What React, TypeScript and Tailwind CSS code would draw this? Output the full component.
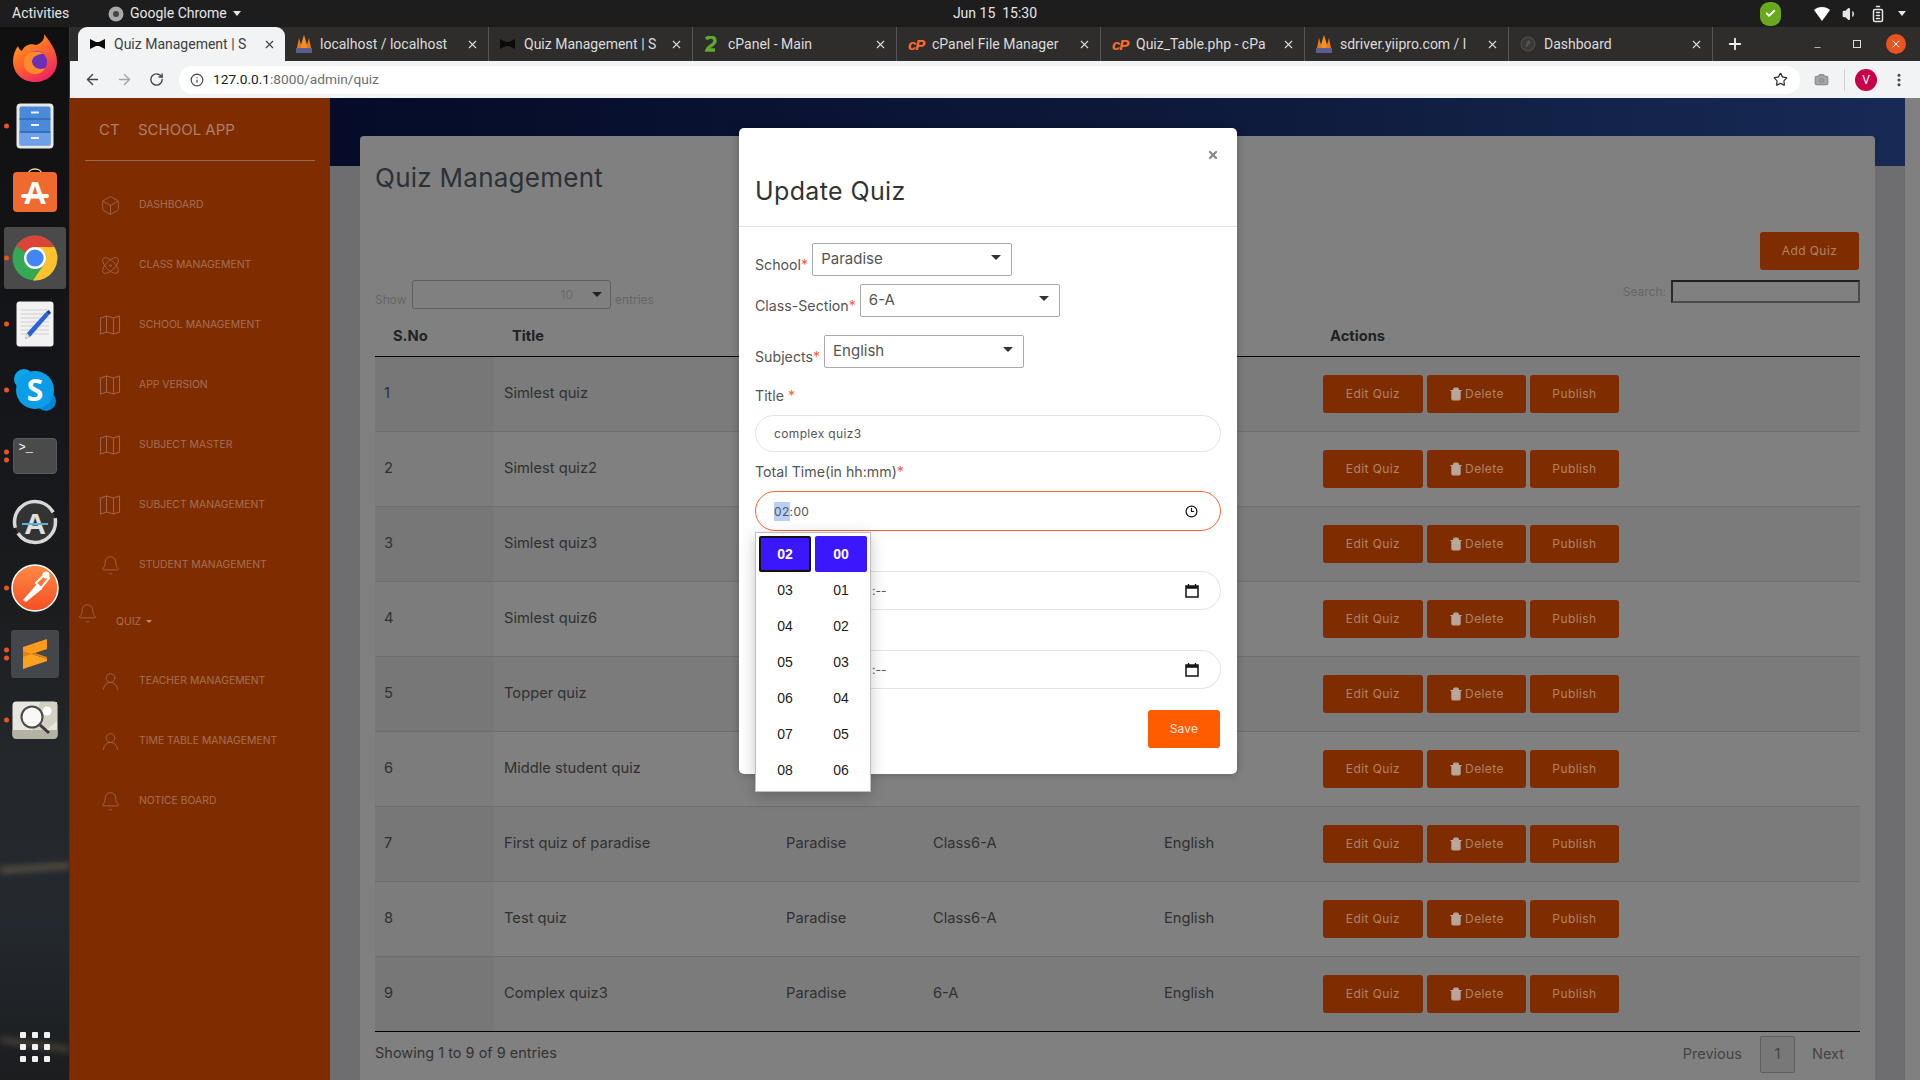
import React from "react";
import { Atom, Bell, Box, UserRound, ArrowLeft, ArrowRight, RotateCw, Info, Star, Camera, Plus, X, Minus, Clock3, Trash2, EllipsisVertical, Volume1, BatteryFull, Check } from "lucide-react";

const ui = "font-['Roboto',sans-serif]";

function MapIcon() {
  return (
    <svg width="22" height="22" viewBox="0 0 22 22" fill="none" stroke="#9c6248" strokeWidth="1.1" strokeLinejoin="round">
      <path d="M1.5 4 L7.5 2 L14.5 4 L20.5 2 V18 L14.5 20 L7.5 18 L1.5 20 Z" />
      <path d="M7.5 2 V18 M14.5 4 V20" />
    </svg>
  );
}

function Dot({ n = 1 }: { n?: number }) {
  return (
    <div className="absolute left-[4px] top-1/2 flex -translate-y-1/2 flex-col gap-[3px]">
      {Array.from({ length: n }).map((_, i) => (
        <span key={i} className="block h-[5px] w-[5px] rounded-full bg-[#e95420]" />
      ))}
    </div>
  );
}

function Firefox() {
  return (
    <svg width="46" height="50" viewBox="0 0 46 50">
      <defs>
        <linearGradient id="ff" x1="0" y1="0" x2="0.6" y2="1">
          <stop offset="0" stopColor="#ffb21a" />
          <stop offset="0.5" stopColor="#ff6a2a" />
          <stop offset="1" stopColor="#f0285f" />
        </linearGradient>
      </defs>
      <path d="M32 1 C38 9 45 17 45 29 C45 41 35 49 23 49 C10 49 1 40 1 28 C1 22 3 17 6 13 C7 16 8 17 10 18 C12 13 18 10 24 12 C30 10 33 6 32 1 Z" fill="url(#ff)" />
      <circle cx="24" cy="29" r="11" fill="#6b2fb8" />
      <path d="M13 24 C17 18 26 17 31 21 C26 21 21 23 20 28 C20 34 27 38 33 35 C29 44 15 43 12 33 C11 30 12 27 13 24 Z" fill="#ff8a2a" />
    </svg>
  );
}

function Files() {
  return (
    <svg width="38" height="46" viewBox="0 0 38 46">
      <rect x="0.5" y="0.5" width="37" height="45" rx="4" fill="#e8e8e4" />
      <rect x="3.5" y="3.5" width="31" height="39" rx="2" fill="#4a8ad8" />
      <rect x="3.5" y="30" width="31" height="12.5" fill="#6f9fe8" />
      <path d="M3.5 16 H34.5 M3.5 29 H34.5" stroke="#1f5aa8" strokeWidth="1.2" />
      <path d="M15 9.5 H23 M15 22 H23 M15 35 H23" stroke="#eef4fb" strokeWidth="2" />
    </svg>
  );
}

function Software() {
  return (
    <svg width="46" height="46" viewBox="0 0 46 46">
      <path d="M16 9 C16 1 30 1 30 9" fill="none" stroke="#f2d9a8" strokeWidth="1.5" />
      <rect x="1" y="6" width="44" height="40" rx="4" fill="#f0692f" />
      <text x="23" y="38" textAnchor="middle" fontFamily="Liberation Sans" fontWeight="700" fontSize="32" fill="#fff">A</text>
      <rect x="9" y="28" width="28" height="4" rx="2" fill="#fff" />
    </svg>
  );
}

function Chrome() {
  return (
    <svg width="46" height="46" viewBox="0 0 46 46">
      <circle cx="23" cy="23" r="22.5" fill="#34a853" />
      <path d="M23 .5 A22.5 22.5 0 0 1 42.5 12 L23 12 A11 11 0 0 0 13.5 17.5 L4 11 A22.5 22.5 0 0 1 23 .5 Z" fill="#db4437" />
      <path d="M42.5 12 A22.5 22.5 0 0 1 21 45.4 L32.6 28.5 A11 11 0 0 0 32.5 17.5 L23 12 Z" fill="#fdc22d" />
      <circle cx="23" cy="23" r="11" fill="#fff" />
      <circle cx="23" cy="23" r="8.6" fill="#4285f4" />
    </svg>
  );
}

function Editor() {
  return (
    <svg width="38" height="46" viewBox="0 0 38 46">
      <rect x="0.5" y="0.5" width="37" height="45" rx="3" fill="#f2f2f2" />
      <path d="M5 9 H33 M5 13 H33 M5 17 H33 M5 21 H33 M5 25 H33 M5 29 H33 M5 33 H33" stroke="#cfcfcf" strokeWidth="1" />
      <path d="M11 32 L30 11 L33 14 L14 36 L9 38 Z" fill="#2a62d8" />
      <path d="M30 11 L33 9 L35 12 L33 14 Z" fill="#1c3f95" />
      <path d="M9 38 L11 32 L14 36 Z" fill="#f4d9b0" />
    </svg>
  );
}

function Skype() {
  return (
    <svg width="44" height="44" viewBox="0 0 44 44">
      <circle cx="11" cy="11" r="10" fill="#0aa6ee" />
      <circle cx="33" cy="33" r="10" fill="#0086d6" />
      <circle cx="22" cy="22" r="19" fill="#0b9de8" />
      <text x="22" y="33" textAnchor="middle" fontFamily="Open Sans" fontWeight="700" fontSize="30" fill="#fff">S</text>
    </svg>
  );
}

function Terminal() {
  return (
    <div className="flex h-[36px] w-[44px] items-start rounded-[4px] border border-[#5a5a5a] bg-[#4a4a4a] pl-[5px] text-[12px] leading-[18px] text-white font-['Liberation_Mono',monospace]">
      &gt;_
    </div>
  );
}

function Updater() {
  return (
    <svg width="46" height="46" viewBox="0 0 46 46">
      <circle cx="23" cy="23" r="20.5" fill="#333" stroke="#d8d8d8" strokeWidth="3.5" strokeDasharray="52 6 60 6" />
      <text x="23" y="35" textAnchor="middle" fontFamily="Liberation Sans" fontWeight="700" fontSize="30" fill="#e0e0e0">A</text>
      <rect x="10" y="24" width="26" height="2" fill="#4fb7d8" />
    </svg>
  );
}

function Postman() {
  return (
    <svg width="48" height="48" viewBox="0 0 48 48">
      <defs>
        <linearGradient id="pm" x1="0.5" y1="0" x2="0.5" y2="1">
          <stop offset="0" stopColor="#ff8b47" />
          <stop offset="1" stopColor="#f54e22" />
        </linearGradient>
      </defs>
      <circle cx="24" cy="24" r="23" fill="url(#pm)" stroke="#fff" strokeWidth="1.5" />
      <path d="M12 36 L26 20 L31 25 L15 38 Z" fill="#fff" />
      <path d="M25 19 L34 10 L38 14 L30 24 Z" fill="none" stroke="#fff" strokeWidth="2" />
      <circle cx="35" cy="11" r="3.5" fill="#fff" />
    </svg>
  );
}

function Sublime() {
  return (
    <svg width="48" height="48" viewBox="0 0 48 48">
      <rect width="48" height="48" rx="3" fill="#43464a" />
      <path d="M12 17 L36 9 V19 L12 27 Z" fill="#ff9a1a" />
      <path d="M12 21 L36 29 V31 L12 39 V29 Z" fill="#ffa11f" />
      <path d="M12 27 L24 23 L36 27 V29 L12 21 Z" fill="#e08314" />
    </svg>
  );
}

function Magnifier() {
  return (
    <svg width="46" height="38" viewBox="0 0 46 38">
      <rect x="0.5" y="0.5" width="45" height="37" rx="4" fill="#e8e7df" />
      <path d="M.5 29 H45.5 V34 a4 4 0 0 1 -4 4 H4.5 a4 4 0 0 1 -4 -4 Z" fill="#b3b2a3" />
      <path d="M28 1 L45 1 V20 L34 29 H20 Z" fill="#d2d1c4" />
      <circle cx="35" cy="10" r="4.5" fill="#fff" />
      <circle cx="20" cy="16" r="10.5" fill="#f8f8f6" stroke="#4a4a4a" strokeWidth="2" />
      <path d="M28 24 L37 32" stroke="#3a3a3a" strokeWidth="3" />
    </svg>
  );
}

function Dock() {
  const items: [React.ReactNode, number, boolean, string][] = [
    [<Firefox />, 0, false, "-mt-[4px]"],
    [<Files />, 1, false, ""],
    [<Software />, 0, false, "-mt-[6px]"],
    [<Chrome />, 1, true, ""],
    [<Editor />, 1, false, ""],
    [<Skype />, 1, false, ""],
    [<Terminal />, 2, false, ""],
    [<Updater />, 0, false, ""],
    [<Postman />, 1, false, ""],
    [<Sublime />, 2, false, ""],
    [<Magnifier />, 1, false, ""],
  ];
  return (
    <div className="relative flex h-full w-[70px] shrink-0 flex-col justify-between overflow-hidden border-r border-[#33383c] bg-[linear-gradient(180deg,#101010_0%,#15161a_35%,#1b1c1e_55%,#24282c_70%,#24292f_85%,#1b1d1f_100%)]">
      <div className="absolute left-0 top-[838px] h-[6px] w-[70px] -rotate-[4deg] bg-[#57503f] blur-[3px]" />
      <div className="absolute left-0 top-[1015px] h-[5px] w-[70px] rotate-[8deg] bg-[#4d4638] blur-[3px]" />
      <div className="relative flex flex-col">
        {items.map(([icon, dots, active, shift], i) => (
          <div key={i} className="relative flex h-[66px] items-center justify-center">
            {active ? <div className="absolute left-[4px] top-[2px] h-[62px] w-[62px] rounded-[3px] bg-[#4a4a4a]" /> : null}
            <div className={`relative flex ${shift}`}>{icon}</div>
            {dots ? <Dot n={dots} /> : null}
          </div>
        ))}
      </div>
      <div className="relative mb-[18px] grid grid-cols-3 gap-x-[6px] gap-y-[6px] self-center">
        {Array.from({ length: 9 }).map((_, i) => (
          <span key={i} className="h-[6px] w-[6px] rounded-[1px] bg-[#f2f2f2]" />
        ))}
      </div>
    </div>
  );
}

function TopBar() {
  return (
    <div className={`flex h-[27px] shrink-0 items-center justify-between bg-[#1d1d1d] pl-[12px] pr-[14px] text-[14px] text-[#e6e6e6] ${ui}`}>
      <div className="flex w-[500px] items-center">
        <span className="w-[95px]">Activities</span>
        <svg width="16" height="16" viewBox="0 0 16 16" className="mr-[6px] ml-[1px]">
          <circle cx="8" cy="8" r="7.5" fill="#a8a8a8" />
          <circle cx="8" cy="8" r="3" fill="#444" />
        </svg>
        <span>Google Chrome</span>
        <span className="ml-[6px] h-0 w-0 border-x-[4px] border-t-[5px] border-x-transparent border-t-[#e6e6e6]" />
      </div>
      <div className="mr-[268px]">Jun 15&nbsp;&nbsp;15:30</div>
      <div className="flex w-[160px] items-center justify-end gap-[11px]">
        <div className="mr-[22px] flex h-[24px] w-[21px] items-center justify-center rounded-[9px] bg-[#6aa81e]">
          <Check size={11} strokeWidth={4} color="#fff" />
        </div>
        <svg width="16" height="14" viewBox="0 0 16 14" className="mr-[1px]">
          <path d="M0 3 C4 -1 12 -1 16 3 L8 14 Z" fill="#fff" />
        </svg>
        <Volume1 size={16} color="#e6e6e6" fill="#e6e6e6" />
        <BatteryFull size={18} color="#e6e6e6" className="-rotate-90" />
        <span className="h-0 w-0 border-x-[4px] border-t-[5px] border-x-transparent border-t-[#e6e6e6]" />
      </div>
    </div>
  );
}

function Favicon({ kind }: { kind: string }) {
  if (kind === "bow")
    return (
      <svg width="15" height="10" viewBox="0 0 15 10">
        <path d="M0 0 L6 3 V7 L0 10 Z M15 0 L9 3 V7 L15 10 Z M6 3 H9 V7 H6 Z" fill="#0b0b0b" />
      </svg>
    );
  if (kind === "pma")
    return (
      <svg width="16" height="18" viewBox="0 0 16 18">
        <path d="M8 0 L12 13 H4 Z" fill="#f0902a" />
        <path d="M3 3 L6 13 H1 Z M13 3 L15 13 H10 Z" fill="#e87a1c" />
        <rect x="0" y="13" width="16" height="5" fill="#5a5f8f" />
      </svg>
    );
  if (kind === "cpanel")
    return (
      <svg width="13" height="17" viewBox="0 0 13 17">
        <path d="M2 3 C5 0 11 0 11 5 C11 9 4 10 3 14 H11" fill="none" stroke="#5fa82a" strokeWidth="3.4" />
      </svg>
    );
  if (kind === "cp")
    return (
      <span className="text-[15px] font-bold italic leading-none tracking-[-1px] text-[#ff6c2c] font-['Liberation_Sans',sans-serif]">cP</span>
    );
  return (
    <svg width="16" height="16" viewBox="0 0 16 16">
      <circle cx="8" cy="8" r="7" fill="#3a3a3a" stroke="#555" />
      <path d="M5 11 L8 4 L11 6 L7 11 Z" fill="#555" />
    </svg>
  );
}

const tabs = [
  ["bow", "Quiz Management | S"],
  ["pma", "localhost / localhost"],
  ["bow", "Quiz Management | S"],
  ["cpanel", "cPanel - Main"],
  ["cp", "cPanel File Manager"],
  ["cp", "Quiz_Table.php - cPa"],
  ["pma", "sdriver.yiipro.com / l"],
  ["dash", "Dashboard"],
];

function TabStrip() {
  return (
    <div className={`flex h-[34px] shrink-0 items-center bg-[#2f2d2c] pl-[8px] text-[14px] ${ui}`}>
      {tabs.map(([k, t], i) => (
        <div
          key={i}
          className={
            i === 0
              ? "flex h-[34px] w-[207px] items-center rounded-t-[9px] bg-[#f1f3f4] pl-[12px] pr-[9px] text-[#3c4043]"
              : "flex h-[34px] w-[204px] items-center border-r border-[#5a5857] pl-[11px] pr-[9px] text-[#dcdcdc]"
          }
        >
          <span className="flex w-[24px] shrink-0 items-center">
            <Favicon kind={k} />
          </span>
          <span className="min-w-0 flex-1 whitespace-nowrap">{t}</span>
          <X size={13} strokeWidth={2} className="ml-[8px] shrink-0" />
        </div>
      ))}
      <Plus size={18} color="#eee" strokeWidth={2.5} className="ml-[13px]" />
      <div className="ml-auto flex items-center pr-[14px] text-[#ddd]">
        <Minus size={9} strokeWidth={2} className="mt-[6px]" />
        <span className="ml-[31px] h-[8px] w-[8px] border border-[#ddd]" />
        <span className="ml-[25px] flex h-[20px] w-[20px] items-center justify-center rounded-full bg-[#e95420]">
          <X size={12} color="#fff" strokeWidth={2} />
        </span>
      </div>
    </div>
  );
}

function Toolbar() {
  return (
    <div className={`flex h-[37px] shrink-0 items-center bg-[#f1f3f4] pl-[14px] pr-[12px] ${ui}`}>
      <ArrowLeft size={17} color="#444" strokeWidth={2} />
      <ArrowRight size={17} color="#a5a7a9" strokeWidth={2} className="ml-[15px]" />
      <RotateCw size={15} color="#444" strokeWidth={2.2} className="ml-[16px]" />
      <div className="ml-[15px] flex h-[28px] w-[1621px] items-center rounded-full bg-white pl-[11px] pr-[12px] text-[13.7px]">
        <Info size={14} color="#444" />
        <span className="ml-[9px] text-[#202124]">127.0.0.1</span>
        <span className="text-[#6a6e72]">:8000/admin/quiz</span>
        <Star size={15} color="#333" className="ml-auto" />
      </div>
      <Camera size={15} color="#8f8f8f" fill="#a5a5a5" className="ml-[14px]" />
      <span className="ml-[15px] h-[22px] w-px bg-[#d0d0d0]" />
      <span className="ml-[10px] flex h-[22px] w-[22px] items-center justify-center rounded-full bg-[#c8004a] text-[12px] text-white">V</span>
      <EllipsisVertical size={16} color="#444" strokeWidth={2.6} className="ml-[14px]" />
    </div>
  );
}

function NavItem({ icon, label }: { icon: React.ReactNode; label: string }) {
  return (
    <div className="flex h-[60px] items-center pl-[29px]">
      <span className="flex w-[22px] justify-center">{icon}</span>
      <span className="ml-[18px] text-[10.4px] uppercase text-[#a56f55]">{label}</span>
    </div>
  );
}

const ic = { size: 21, color: "#9c6248", strokeWidth: 1.1 };

function Sidebar() {
  return (
    <div className="flex h-full w-[260px] shrink-0 flex-col bg-[#7f2d00]">
      <div className="mx-[15px] flex h-[63px] items-center border-b border-[#9a6a50] pt-[3px] text-[15px] text-[#ad8068]">
        <span className="ml-[14px] w-[39px]">CT</span>
        <span>SCHOOL APP</span>
      </div>
      <div className="pt-[14px]">
        <NavItem icon={<Box {...ic} />} label="Dashboard" />
        <NavItem icon={<Atom {...ic} />} label="Class Management" />
        <NavItem icon={<MapIcon />} label="School Management" />
        <NavItem icon={<MapIcon />} label="App Version" />
        <NavItem icon={<MapIcon />} label="Subject Master" />
        <NavItem icon={<MapIcon />} label="Subject Management" />
        <NavItem icon={<Bell {...ic} />} label="Student Management" />
        <div className="flex h-[56px] items-start pl-[7px] pt-[8px]">
          <Bell {...ic} />
          <span className="ml-[18px] mt-[11px] flex items-center text-[10.4px] uppercase text-[#a56f55]">
            Quiz
            <span className="ml-[5px] h-0 w-0 border-x-[3px] border-t-[3px] border-x-transparent border-t-[#b98a72]" />
          </span>
        </div>
        <NavItem icon={<UserRound {...ic} />} label="Teacher Management" />
        <NavItem icon={<UserRound {...ic} />} label="Time Table Management" />
        <NavItem icon={<Bell {...ic} />} label="Notice Board" />
      </div>
    </div>
  );
}

const rows = [
  ["1", "Simlest quiz", "", "", ""],
  ["2", "Simlest quiz2", "", "", ""],
  ["3", "Simlest quiz3", "", "", ""],
  ["4", "Simlest quiz6", "", "", ""],
  ["5", "Topper quiz", "", "", ""],
  ["6", "Middle student quiz", "", "", ""],
  ["7", "First quiz of paradise", "Paradise", "Class6-A", "English"],
  ["8", "Test quiz", "Paradise", "Class6-A", "English"],
  ["9", "Complex quiz3", "Paradise", "6-A", "English"],
];

const btn = "flex h-[38px] items-center justify-center rounded-[3px] bg-[#7f2d00] text-[12px] tracking-[0.035em] text-[#b08268]";

function QuizTable() {
  return (
    <table className="w-[1485px] table-fixed border-collapse border-b border-black text-[14.7px] text-[#303030]">
      <colgroup>
        <col className="w-[119px]" />
        <col className="w-[282px]" />
        <col className="w-[147px]" />
        <col className="w-[231px]" />
        <col className="w-[159px]" />
        <col className="w-[547px]" />
      </colgroup>
      <thead>
        <tr className="h-[47px] border-b border-black text-left font-bold text-[#222]">
          <th className="pl-[18px] pt-[7px]">S.No</th>
          <th className="pl-[18px] pt-[7px]">Title</th>
          <th />
          <th />
          <th />
          <th className="pl-[17px] pt-[7px]">Actions</th>
        </tr>
      </thead>
      <tbody>
        {rows.map((r, i) => (
          <tr key={r[0]} className={i % 2 === 0 ? "h-[75px] border-t border-[#6f6f6f] bg-[#7b7b7b]" : "h-[75px] border-t border-[#6f6f6f]"}>
            <td className={i % 2 === 0 ? "bg-[#777777] pl-[9px]" : "bg-[#7c7c7c] pl-[9px]"}>{r[0]}</td>
            <td className="pl-[10px]">{r[1]}</td>
            <td className="pl-[10px]">{r[2]}</td>
            <td className="pl-[10px]">{r[3]}</td>
            <td className="pl-[10px]">{r[4]}</td>
            <td className="pl-[10px]">
              <div className="flex gap-[4px]">
                <div className={`${btn} w-[100px]`}>Edit Quiz</div>
                <div className={`${btn} w-[99px]`}>
                  <Trash2 size={14} color="#b9a79c" fill="#b9a79c" className="mr-[2px]" />
                  Delete
                </div>
                <div className={`${btn} w-[89px]`}>Publish</div>
              </div>
            </td>
          </tr>
        ))}
      </tbody>
    </table>
  );
}

function Card() {
  return (
    <div className="mx-[30px] -mt-[30px] h-[1000px] rounded-t-[4px] bg-[#808080] px-[15px]">
      <h1 className="pt-[25px] pb-[0px] text-[26px] leading-[33px] tracking-[0.01em] text-[#2c3136]">Quiz Management</h1>
      <div className="mt-[38px] flex justify-end pr-[1px]">
        <div className={`${btn} w-[99px]`}>Add Quiz</div>
      </div>
      <div className="mt-[10px] flex h-[29px] justify-between text-[12px] text-[#666]">
        <div className="flex items-end">
          <span className="w-[37px]">Show</span>
          <div className="flex h-[29px] w-[199px] items-center justify-end rounded-[3px] border border-[#5f5f5f] pr-[8px]">
            <span className="mr-[19px] text-[#6a6a6a]">10</span>
            <span className="h-0 w-0 border-x-[5px] border-t-[5px] border-x-transparent border-t-[#222]" />
          </div>
          <span className="ml-[4px]">entries</span>
        </div>
        <div className="flex items-start">
          <span className="mt-[3px] mr-[5px]">Search:</span>
          <div className="h-[23px] w-[189px] border-2 border-b-[#4a4a4a] border-l-[#2a2a2a] border-r-[#4a4a4a] border-t-[#1f1f1f]" />
        </div>
      </div>
      <QuizTable />
      <div className="flex h-[48px] items-start justify-between text-[14.5px] text-[#333]">
        <span className="mt-[10px]">Showing 1 to 9 of 9 entries</span>
        <div className="mt-[4px] flex items-center pr-[16px] text-[#444]">
          <span>Previous</span>
          <span className="ml-[18px] flex h-[37px] w-[35px] items-center justify-center rounded-[2px] border border-[#5f5f5f] bg-[#787878]">1</span>
          <span className="ml-[17px]">Next</span>
        </div>
      </div>
    </div>
  );
}

function SelectBox({ value }: { value: string }) {
  return (
    <div className="flex h-[33px] w-[200px] items-center justify-between rounded-[2px] border border-[#a9a9a9] pl-[8px] pr-[10px] text-[15px] text-[#555]">
      <span className="-mt-[1px]">{value}</span>
      <span className="-mt-[4px] h-0 w-0 border-x-[5px] border-t-[5px] border-x-transparent border-t-[#333]" />
    </div>
  );
}

function Req() {
  return <span className="text-[#f96332]">*</span>;
}

function FormRow({ label, value, mt }: { label: string; value: string; mt: string }) {
  return (
    <div className={`flex items-start ${mt}`}>
      <span className="mt-[12px] mr-[4px] text-[14.2px] leading-[20px] text-[#555]">
        {label}
        <Req />
      </span>
      <SelectBox value={value} />
    </div>
  );
}

function Calendar() {
  return (
    <svg width="14" height="14" viewBox="0 0 14 14" fill="none">
      <path d="M1 2 H13 V13 H1 Z" stroke="#111" strokeWidth="1.5" />
      <path d="M1 3.5 H13" stroke="#111" strokeWidth="2.5" />
      <path d="M3.5 0 V2 M10.5 0 V2" stroke="#111" strokeWidth="1.3" />
    </svg>
  );
}

function Modal() {
  return (
    <div className="absolute left-[739px] top-[128px] flex h-[646px] w-[498px] flex-col rounded-[5px] bg-white shadow-[0_0_8px_rgba(0,0,0,0.25)]">
      <div className="h-[99px] shrink-0 border-b border-[#e3e3e3] px-[16px]">
        <div className="flex justify-end pt-[21px] pr-[2px]">
          <X size={12} color="#888" strokeWidth={4.5} />
        </div>
        <h2 className="mt-[14px] text-[25px] leading-[32px] tracking-[0.015em] text-[#333]">Update Quiz</h2>
      </div>
      <div className="px-[16px]">
        <FormRow label="School" value="Paradise" mt="mt-[16px]" />
        <FormRow label="Class-Section" value="6-A" mt="mt-[8px]" />
        <FormRow label="Subjects" value="English" mt="mt-[18px]" />
        <div className="mt-[18px] text-[14.2px] leading-[20px] text-[#555]">
          Title <Req />
        </div>
        <div className="mt-[9px] flex h-[37px] items-center rounded-full border border-[#e3e3e3] pl-[18px] text-[12px] tracking-[0.03em] text-[#555]">
          complex quiz3
        </div>
        <div className="mt-[10px] text-[14.2px] leading-[20px] text-[#555]">
          Total Time(in hh:mm)
          <Req />
        </div>
        <div className="mt-[9px] flex h-[40px] items-center justify-between rounded-full border border-[#f96332] pl-[18px] pr-[22px] text-[12px] tracking-[0.03em] text-[#555]">
          <span className="mt-[1px]">
            <span className="bg-[#b8cff7] py-[2px]">02</span>:00
          </span>
          <Clock3 size={13} color="#111" strokeWidth={2.2} />
        </div>
        <div className="mt-[40px] flex h-[39px] items-center justify-between rounded-full border border-[#e3e3e3] pl-[116px] pr-[21px] text-[12px] text-[#555]">
          <span>:--</span>
          <Calendar />
        </div>
        <div className="mt-[40px] flex h-[39px] items-center justify-between rounded-full border border-[#e3e3e3] pl-[116px] pr-[21px] text-[12px] text-[#555]">
          <span>:--</span>
          <Calendar />
        </div>
        <div className="mt-[21px] flex justify-end pr-[1px]">
          <div className="flex h-[38px] w-[72px] items-center justify-center rounded-[3px] bg-[#ff5c00] text-[12px] tracking-[0.02em] text-[#ffe8dc]">Save</div>
        </div>
      </div>
    </div>
  );
}

function TimePopup() {
  const left = ["03", "04", "05", "06", "07", "08"];
  const right = ["01", "02", "03", "04", "05", "06"];
  const cell = "flex h-[36px] items-center justify-center text-[14px] text-[#1c1c1c]";
  return (
    <div className="absolute left-[755px] top-[532px] h-[260px] w-[116px] border border-[#bdbdbd] bg-white p-[3px] shadow-[0_4px_14px_rgba(0,0,0,0.22)] font-['Liberation_Sans',sans-serif]">
      <div className="grid grid-cols-2 gap-x-[4px]">
        <div className="flex h-[36px] items-center justify-center rounded-[2px] border-2 border-[#111] bg-[#3a17ff] text-[14px] font-bold text-white">02</div>
        <div className="flex h-[36px] items-center justify-center rounded-[2px] bg-[#3a17ff] text-[14px] font-bold text-white">00</div>
        {left.map((l, i) => (
          <React.Fragment key={l}>
            <div className={cell}>{l}</div>
            <div className={cell}>{right[i]}</div>
          </React.Fragment>
        ))}
      </div>
    </div>
  );
}

export default function App() {
  return (
    <div className="relative flex h-[1080px] w-[1920px] flex-col overflow-hidden bg-[#6e6e70] font-['Inter',sans-serif]">
      <TopBar />
      <div className="flex min-h-0 flex-1">
        <Dock />
        <div className="flex min-w-0 flex-1 flex-col">
          <TabStrip />
          <Toolbar />
          <div className="flex min-h-0 flex-1">
            <Sidebar />
            <div className="min-w-0 flex-1 overflow-hidden">
              <div className="h-[68px] bg-[linear-gradient(90deg,#050b28_0%,#0f1b3d_60%,#172a55_100%)]" />
              <Card />
            </div>
            <div className="w-[15px] shrink-0 bg-[#808080]" />
          </div>
        </div>
      </div>
      <Modal />
      <TimePopup />
    </div>
  );
}
